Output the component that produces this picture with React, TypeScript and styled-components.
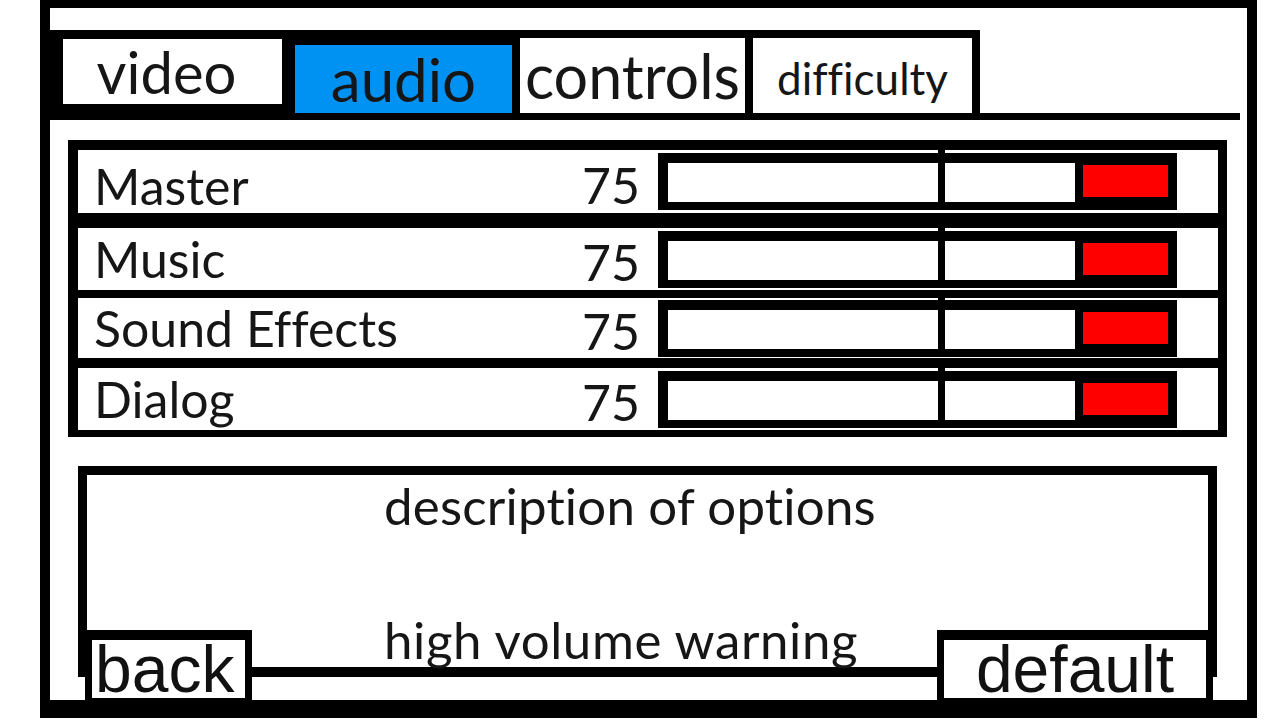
import React from "react";
import styled, { createGlobalStyle } from "styled-components";

const Global = createGlobalStyle`
  html, body { margin: 0; padding: 0; background: #fff; }
  body {
    font-family: Lato, "Liberation Sans", sans-serif;
    color: #161616;
    font-variant-ligatures: none;
    font-feature-settings: "liga" 0, "clig" 0;
  }
  #root { width: 1280px; height: 720px; overflow: hidden; }
`;

const Frame = styled.div`
  box-sizing: border-box;
  margin-left: 40px;
  width: 1217px;
  height: 718px;
  border: 0 solid #000;
  border-width: 8px 10px 18px 10px;
  padding-top: 22px;
  display: flex;
  flex-direction: column;
`;

const TabStrip = styled.div`
  display: flex;
  align-items: flex-end;
  height: 90px;
  margin-right: 7px;
`;

const TabGroup = styled.div`
  display: flex;
  align-items: flex-start;
  height: 100%;
  box-sizing: border-box;
  background: #000;
  padding: 0 8px 0 13px;
`;

const Tab = styled.div<{ $w: number; $h: number; $top: number; $gap: number; $size: number; $active?: boolean; $pad?: number; $shiftX?: number }>`
  box-sizing: border-box;
  width: ${(p) => p.$w}px;
  height: ${(p) => p.$h}px;
  margin-top: ${(p) => p.$top}px;
  margin-left: ${(p) => p.$gap}px;
  padding-top: ${(p) => p.$pad ?? 0}px;
  padding-right: ${(p) => p.$shiftX ?? 0}px;
  background: ${(p) => (p.$active ? "#0092f2" : "#fff")};
  display: flex;
  align-items: center;
  justify-content: center;
  font-size: ${(p) => p.$size}px;
  white-space: nowrap;
`;

const TabTail = styled.div`
  flex: 1;
  height: 7px;
  background: #000;
`;

const Panel = styled.div`
  box-sizing: border-box;
  margin: 20px 0 0 18px;
  width: 1159px;
  background: #000;
  padding: 10px 9px 7px 10px;
  display: flex;
  flex-direction: column;
`;

const Row = styled.div<{ $h: number; $gap: number }>`
  height: ${(p) => p.$h}px;
  margin-top: ${(p) => p.$gap}px;
  background: #fff;
  display: flex;
  align-items: center;
`;

const Label = styled.div<{ $shift: number }>`
  flex: 1;
  padding-left: 16px;
  padding-top: ${(p) => p.$shift * 2}px;
  font-size: 50px;
  white-space: nowrap;
`;

const Value = styled.div`
  margin-right: 18px;
  padding-top: 6px;
  font-size: 50px;
`;

const Slider = styled.div`
  box-sizing: border-box;
  width: 519px;
  height: 57px;
  margin-right: 41px;
  background: #000;
  padding: 10px 9px 8px 10px;
  display: flex;
  align-items: flex-start;
`;

const Track = styled.div<{ $w: number }>`
  width: ${(p) => p.$w}px;
  height: 39px;
  background: #fff;
`;

const Divider = styled.div`
  width: 7px;
  align-self: stretch;
  margin: -13px 0 -8px;
  background: #000;
`;

const Knob = styled.div`
  width: 85px;
  height: 32px;
  margin: 2px 0 0 8px;
  background: #ff0000;
`;

const Footer = styled.div`
  position: relative;
  margin: 29px 0 0 28px;
  width: 1139px;
  flex: 1;
`;

const Description = styled.div`
  box-sizing: border-box;
  height: 211px;
  border: 0 solid #000;
  border-width: 9px 9px 10px 9px;
  padding-left: 297px;
  font-size: 51px;
  line-height: 1.2;
`;

const DescLine = styled.div<{ $gap: number; $spacing: number }>`
  margin-top: ${(p) => p.$gap}px;
  letter-spacing: ${(p) => p.$spacing}px;
  white-space: nowrap;
`;

const Button = styled.div<{ $left: number; $w: number; $center?: boolean }>`
  position: absolute;
  left: ${(p) => p.$left}px;
  bottom: 0;
  box-sizing: border-box;
  width: ${(p) => p.$w}px;
  height: 70px;
  background: #fff;
  border: 0 solid #000;
  border-width: 10px 7px 2px 7px;
  padding-left: ${(p) => (p.$center ? 0 : 3)}px;
  text-align: ${(p) => (p.$center ? "center" : "left")};
  font-family: "Liberation Sans", Arial, sans-serif;
  font-size: 66px;
  line-height: 58px;
  color: #111;
`;

const rows = [
  { label: "Master", h: 63, gap: 0, shift: 4 },
  { label: "Music", h: 62, gap: 15, shift: 0 },
  { label: "Sound Effects", h: 60, gap: 8, shift: 0 },
  { label: "Dialog", h: 62, gap: 10, shift: 0 },
];

export default function App() {
  return (
    <>
      <Global />
      <Frame>
        <TabStrip>
          <TabGroup>
            <Tab $w={219} $h={65} $top={9} $gap={0} $size={58} $shiftX={12}>video</Tab>
            <Tab $w={217} $h={68} $top={15} $gap={13} $size={60} $active>audio</Tab>
            <Tab $w={225} $h={75} $top={8} $gap={8} $size={61}>controls</Tab>
            <Tab $w={219} $h={75} $top={8} $gap={8} $size={44} $pad={5}>difficulty</Tab>
          </TabGroup>
          <TabTail />
        </TabStrip>
        <Panel>
          {rows.map((r) => (
            <Row key={r.label} $h={r.h} $gap={r.gap}>
              <Label $shift={r.shift}>{r.label}</Label>
              <Value>75</Value>
              <Slider>
                <Track $w={270} />
                <Divider />
                <Track $w={130} />
                <Knob />
              </Slider>
            </Row>
          ))}
        </Panel>
        <Footer>
          <Description>
            <DescLine $gap={0} $spacing={0.2}>description of options</DescLine>
            <DescLine $gap={73} $spacing={0.6}>high volume warning</DescLine>
          </Description>
          <Button $left={7} $w={167}>back</Button>
          <Button $left={859} $w={276} $center>default</Button>
        </Footer>
      </Frame>
    </>
  );
}
